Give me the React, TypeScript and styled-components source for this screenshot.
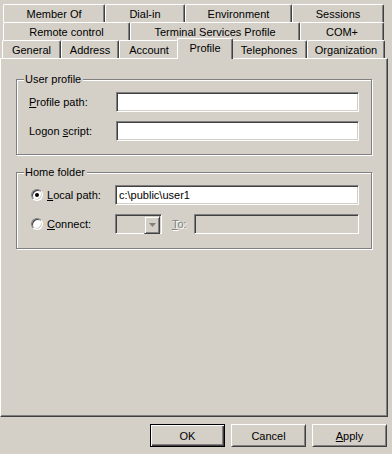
import * as React from "react";
import styled, { createGlobalStyle } from "styled-components";

const GlobalStyle = createGlobalStyle`
  html, body {
    margin: 0;
    padding: 0;
    background: #d4d0c8;
  }
  body {
    font-family: "Liberation Sans", Arial, sans-serif;
    font-size: 11px;
    color: #000;
  }
`;

const TAB_ROWS = [
  [
    { label: "Member Of", w: 102 },
    { label: "Dial-in", w: 80 },
    { label: "Environment", w: 107 },
    { label: "Sessions", w: 92 },
  ],
  [
    { label: "Remote control", w: 127 },
    { label: "Terminal Services Profile", w: 170 },
    { label: "COM+", w: 84 },
  ],
  [
    { label: "General", w: 59 },
    { label: "Address", w: 58 },
    { label: "Account", w: 60 },
    { label: "Profile", w: 52, selected: true },
    { label: "Telephones", w: 76 },
    { label: "Organization", w: 78 },
  ],
];

const Key = ({ text, k }: { text: string; k: number }) => (
  <>
    {text.slice(0, k)}
    <u>{text[k]}</u>
    {text.slice(k + 1)}
  </>
);

const App = () => {
  return (
    <Dialog>
      <GlobalStyle />
      <TabStrip>
        {TAB_ROWS.map((row, i) => (
          <TabRow key={i} $front={i === TAB_ROWS.length - 1}>
            {row.map((t: any) => (
              <Tab key={t.label} $w={t.w} $selected={!!t.selected}>
                {t.label}
              </Tab>
            ))}
          </TabRow>
        ))}
      </TabStrip>
      <Panel>
        <Group>
          <Legend>User profile</Legend>
          <FieldRow>
            <Label>
              <Key text="Profile path:" k={0} />
            </Label>
            <TextBox $w={243} />
          </FieldRow>
          <FieldRow>
            <Label>
              <Key text="Logon script:" k={6} />
            </Label>
            <TextBox $w={243} />
          </FieldRow>
        </Group>
        <Group $home>
          <Legend>Home folder</Legend>
          <FieldRow>
            <Radio $checked />
            <RadioLabel>
              <Key text="Local path:" k={0} />
            </RadioLabel>
            <TextBox $w={244}>c:\public\user1</TextBox>
          </FieldRow>
          <FieldRow>
            <Radio />
            <RadioLabel>
              <Key text="Connect:" k={0} />
            </RadioLabel>
            <Combo>
              <ComboButton>
                <svg width="7" height="4" viewBox="0 0 7 4">
                  <path d="M0 0h7L3.5 4z" fill="#808080" />
                </svg>
              </ComboButton>
            </Combo>
            <DisabledLabel>
              <Key text="To:" k={0} />
            </DisabledLabel>
            <TextBox $w={165} $disabled />
          </FieldRow>
        </Group>
      </Panel>
      <ButtonBar>
        <Button $default>OK</Button>
        <Button>Cancel</Button>
        <Button>
          <Key text="Apply" k={0} />
        </Button>
      </ButtonBar>
    </Dialog>
  );
};
export default App;

const Dialog = styled.div`
  width: 392px;
  height: 454px;
  box-sizing: border-box;
  padding: 4px 4px 0 0;
  background: #d4d0c8;
  display: flex;
  flex-direction: column;
  overflow: hidden;
`;

const TabStrip = styled.div`
  display: flex;
  flex-direction: column;
`;

const TabRow = styled.div<{ $front?: boolean }>`
  display: flex;
  height: 18px;
  padding-left: ${(p) => (p.$front ? "2px" : "3px")};
`;

const Tab = styled.div<{ $w: number; $selected?: boolean }>`
  position: relative;
  box-sizing: border-box;
  width: ${(p) => (p.$selected ? p.$w + 4 : p.$w)}px;
  height: ${(p) => (p.$selected ? "21px" : "18px")};
  margin: ${(p) => (p.$selected ? "-2px -2px -1px -2px" : "0")};
  z-index: ${(p) => (p.$selected ? 2 : 1)};
  background: #d4d0c8;
  border-top: 1px solid #fff;
  border-left: 1px solid #fff;
  border-right: 1px solid #404040;
  border-radius: 2px 2px 0 0;
  box-shadow: inset -1px 0 #808080;
  display: flex;
  align-items: center;
  justify-content: center;
  padding-bottom: ${(p) => (p.$selected ? "2px" : "0")};
  white-space: nowrap;
`;

const Panel = styled.div`
  box-sizing: border-box;
  width: 388px;
  height: 359px;
  padding: 14px 15px 0 15px;
  border-top: 1px solid #fff;
  border-left: 1px solid #fff;
  border-right: 1px solid #404040;
  border-bottom: 1px solid #404040;
  box-shadow: inset -1px -1px #808080;
  display: flex;
  flex-direction: column;
  gap: 11px;
`;

const Group = styled.fieldset<{ $home?: boolean }>`
  margin: 0;
  padding: 6px 12px ${(p) => (p.$home ? "14px" : "13px")} 12px;
  width: 356px;
  box-sizing: border-box;
  border: 1px solid #808080;
  box-shadow: inset 1px 1px #fff, 1px 1px #fff;
  display: flex;
  flex-direction: column;
  gap: 9px;
`;

const Legend = styled.legend`
  padding: 0 2px 0 1px;
  margin-left: -5px;
  line-height: 13px;
  background: #d4d0c8;
`;

const FieldRow = styled.div`
  display: flex;
  align-items: center;
  height: 20px;
`;

const Label = styled.span`
  width: 87px;
  flex-shrink: 0;
`;

const RadioLabel = styled.span`
  width: 68px;
  flex-shrink: 0;
`;

const TextBox = styled.div<{ $w: number; $disabled?: boolean }>`
  box-sizing: border-box;
  width: ${(p) => p.$w}px;
  height: 20px;
  padding: 2px 3px 0 3px;
  line-height: 14px;
  background: ${(p) => (p.$disabled ? "#d4d0c8" : "#fff")};
  border-top: 1px solid #808080;
  border-left: 1px solid #808080;
  border-right: 1px solid #fff;
  border-bottom: 1px solid #fff;
  box-shadow: inset 1px 1px #404040, inset -1px -1px #d4d0c8;
  white-space: nowrap;
`;

const Radio = styled.span<{ $checked?: boolean }>`
  position: relative;
  box-sizing: border-box;
  width: 12px;
  height: 12px;
  margin: 0 4px 0 2px;
  flex-shrink: 0;
  border-radius: 50%;
  background: #fff;
  border-top: 1px solid #808080;
  border-left: 1px solid #808080;
  border-right: 1px solid #fff;
  border-bottom: 1px solid #fff;
  box-shadow: inset 1px 1px #404040, inset -1px -1px #d4d0c8;
  &::after {
    content: "";
    display: ${(p) => (p.$checked ? "block" : "none")};
    position: absolute;
    left: 3px;
    top: 3px;
    width: 4px;
    height: 4px;
    border-radius: 50%;
    background: #000;
  }
`;

const Combo = styled.div`
  box-sizing: border-box;
  width: 47px;
  height: 20px;
  padding: 2px;
  display: flex;
  justify-content: flex-end;
  background: #d4d0c8;
  border-top: 1px solid #808080;
  border-left: 1px solid #808080;
  border-right: 1px solid #fff;
  border-bottom: 1px solid #fff;
  box-shadow: inset 1px 1px #404040, inset -1px -1px #d4d0c8;
`;

const ComboButton = styled.div`
  box-sizing: border-box;
  width: 16px;
  margin: -1px -1px -1px 0;
  height: 18px;
  display: flex;
  align-items: center;
  justify-content: center;
  border-top: 1px solid #d4d0c8;
  border-left: 1px solid #d4d0c8;
  border-right: 1px solid #404040;
  border-bottom: 1px solid #404040;
  box-shadow: inset 1px 1px #fff, inset -1px -1px #808080;
`;

const DisabledLabel = styled.span`
  width: 32px;
  padding-left: 10px;
  box-sizing: border-box;
  flex-shrink: 0;
  color: #808080;
  text-shadow: 1px 1px #fff;
`;

const ButtonBar = styled.div`
  display: flex;
  justify-content: flex-end;
  gap: 6px;
  padding: 7px 1px 0 0;
`;

const Button = styled.div<{ $default?: boolean }>`
  box-sizing: border-box;
  width: 75px;
  height: 23px;
  display: flex;
  align-items: center;
  justify-content: center;
  background: #d4d0c8;
  border: 1px solid;
  border-color: ${(p) =>
    p.$default ? "#000" : "#fff #404040 #404040 #fff"};
  box-shadow: ${(p) =>
    p.$default
      ? "inset 1px 1px #fff, inset -1px -1px #404040, inset -2px -2px #808080"
      : "inset 1px 1px #d4d0c8, inset -1px -1px #808080"};
`;
